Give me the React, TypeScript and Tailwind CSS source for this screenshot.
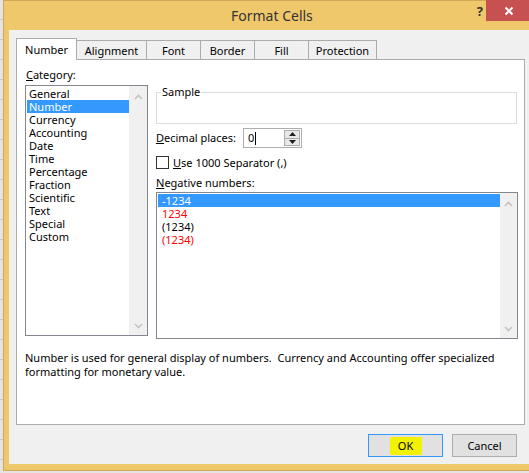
import React from "react";

const CATEGORIES = [
  "General",
  "Number",
  "Currency",
  "Accounting",
  "Date",
  "Time",
  "Percentage",
  "Fraction",
  "Scientific",
  "Text",
  "Special",
  "Custom",
];

const NEGATIVES: { label: string; red: boolean }[] = [
  { label: "-1234", red: false },
  { label: "1234", red: true },
  { label: "(1234)", red: false },
  { label: "(1234)", red: true },
];

const TABS: { label: string; w: string }[] = [
  { label: "Alignment", w: "w-[71px]" },
  { label: "Font", w: "w-[55px]" },
  { label: "Border", w: "w-[55px]" },
  { label: "Fill", w: "w-[55px]" },
  { label: "Protection", w: "w-[69px]" },
];

function Chevron({ up }: { up?: boolean }) {
  return (
    <svg width="9" height="6" viewBox="0 0 9 6" className="block mx-auto">
      <path
        d={up ? "M1 5 L4.5 1.5 L8 5" : "M1 1 L4.5 4.5 L8 1"}
        fill="none"
        stroke="#c3c3c3"
        strokeWidth="1.6"
      />
    </svg>
  );
}

function ScrollTrack({ pt, pb, w }: { pt: string; pb: string; w: string }) {
  return (
    <div className={`${w} shrink-0 bg-[#f0f0f0] flex flex-col justify-between ${pt} ${pb}`}>
      <Chevron up />
      <Chevron />
    </div>
  );
}

export default function App() {
  return (
    <div className="w-[529px] h-[473px] overflow-hidden bg-[#e4e4e4] flex font-['Noto_Sans','Liberation_Sans',sans-serif] text-[11px] text-black">
      {/* spreadsheet behind */}
      <div className="w-[3px] shrink-0 flex flex-col">
        {Array.from({ length: 24 }).map((_, i) => (
          <div key={i} className="h-[20px] shrink-0 border-b border-[#c8c8c8]" />
        ))}
      </div>

      {/* window */}
      <div className="w-[540px] h-[471px] shrink-0 flex flex-col bg-[#f0c86c] border-l border-t border-b border-[#d2a757]">
        {/* title bar */}
        <div className="h-[29px] shrink-0 flex items-start">
          <span className="ml-[227px] mt-[5px] text-[14px] leading-[20px] text-[#333]">Format Cells</span>
          <span className="ml-[164px] mt-[1px] text-[13px] leading-[18px] font-bold text-[#333]">?</span>
          <div className="ml-[3px] -mt-px w-[45px] h-[21px] bg-[#c75050] flex items-center justify-center">
            <svg width="10" height="10" viewBox="0 0 10 10">
              <path d="M1.5 1.5 L8.5 8.5 M8.5 1.5 L1.5 8.5" stroke="#fff" strokeWidth="2" />
            </svg>
          </div>
        </div>

        {/* client */}
        <div className="ml-[5px] w-[530px] h-[434px] shrink-0 bg-[#f0f0f0] pt-[8px] pl-[7px]">
          {/* tabs */}
          <div className="h-[21px] flex items-end">
            <div className="relative z-10 w-[61px] h-[22px] -mb-px bg-white border-l border-t border-r border-[#acacac] flex items-center justify-center leading-[14px]">
              Number
            </div>
            {TABS.map((t) => (
              <div
                key={t.label}
                className={`${t.w} h-[19px] -ml-px bg-[#f0f0f0] border-l border-t border-r border-[#acacac] flex items-center justify-center leading-[14px] pt-px`}
              >
                {t.label}
              </div>
            ))}
          </div>

          {/* panel */}
          <div className="w-[509px] h-[366px] bg-white border border-[#acacac]">
            <div className="flex pl-[8px] pt-[7px]">
              {/* category column */}
              <div className="w-[123px] shrink-0">
                <div className="h-[16px] leading-[16px] pl-px">
                  <u>C</u>ategory:
                </div>
                <div className="mt-[2px] h-[251px] border border-[#828790] flex">
                  <div className="flex-1 pl-px pt-px">
                    {CATEGORIES.map((c) => (
                      <div
                        key={c}
                        className={`h-[13px] leading-[13px] pl-[2px] ${
                          c === "Number" ? "bg-[#3399ff] text-white" : ""
                        }`}
                      >
                        {c}
                      </div>
                    ))}
                  </div>
                  <ScrollTrack w="w-[18px]" pt="pt-[8px]" pb="pb-[6px]" />
                </div>
              </div>

              {/* right column */}
              <div className="ml-[8px] w-[362px] shrink-0">
                <fieldset className="mt-[17px] w-[361px] h-[40px] border border-[#dcdcdc]">
                  <legend className="ml-[4px] px-px leading-[16px]">Sample</legend>
                </fieldset>

                <div className="mt-[4px] h-[20px] flex items-center">
                  <div className="w-[87px] leading-[20px]">
                    <u>D</u>ecimal places:
                  </div>
                  <div className="w-[59px] h-[20px] border border-[#abadb3] bg-white flex">
                    <div className="flex-1 flex items-center pl-[4px] leading-[16px]">
                      0<span className="ml-px w-px h-[13px] bg-black" />
                    </div>
                    <div className="w-[16px] mt-px mb-px mr-px flex flex-col border border-[#acacac] bg-[#e8e8e8]">
                      <div className="flex-1 flex items-center justify-center border-b border-[#acacac]">
                        <svg width="7" height="4" viewBox="0 0 7 4">
                          <path d="M0 4 L3.5 0 L7 4 Z" fill="#222" />
                        </svg>
                      </div>
                      <div className="flex-1 flex items-center justify-center">
                        <svg width="7" height="4" viewBox="0 0 7 4">
                          <path d="M0 0 L3.5 4 L7 0 Z" fill="#222" />
                        </svg>
                      </div>
                    </div>
                  </div>
                </div>

                <div className="mt-[8px] h-[13px] flex items-center">
                  <div className="w-[13px] h-[13px] border border-[#333] bg-white" />
                  <span className="ml-[4px] leading-[13px]">
                    <u>U</u>se 1000 Separator (,)
                  </span>
                </div>

                <div className="mt-[6px] h-[16px] leading-[16px]">
                  <u>N</u>egative numbers:
                </div>

                <div className="mt-px h-[147px] border border-[#828790] flex">
                  <div className="flex-1 pl-px pt-px">
                    {NEGATIVES.map((n, i) => (
                      <div
                        key={i}
                        className={`h-[13px] leading-[13px] pl-[4px] ${
                          i === 0 ? "bg-[#3399ff] text-white" : n.red ? "text-[#ff0000]" : ""
                        }`}
                      >
                        {n.label}
                      </div>
                    ))}
                  </div>
                  <ScrollTrack w="w-[17px]" pt="pt-[8px]" pb="pb-[6px]" />
                </div>
              </div>
            </div>

            <p className="mt-[12px] pl-[8px] leading-[14px] whitespace-pre">
              {"Number is used for general display of numbers.  Currency and Accounting offer specialized\nformatting for monetary value."}
            </p>
          </div>

          {/* buttons */}
          <div className="w-[509px] mt-[9px] flex justify-end pr-[8px] gap-[9px]">
            <button className="w-[75px] h-[23px] bg-[#e1e1e1] border border-[#3399ff] flex items-center justify-center">
              <span className="w-[32px] h-[18px] bg-[#f2f200] rounded-[2px] flex items-center justify-center leading-[14px]">
                OK
              </span>
            </button>
            <button className="w-[65px] h-[23px] bg-[#e1e1e1] border border-[#adadad] flex items-center justify-center leading-[14px]">
              Cancel
            </button>
          </div>
        </div>
      </div>
    </div>
  );
}
